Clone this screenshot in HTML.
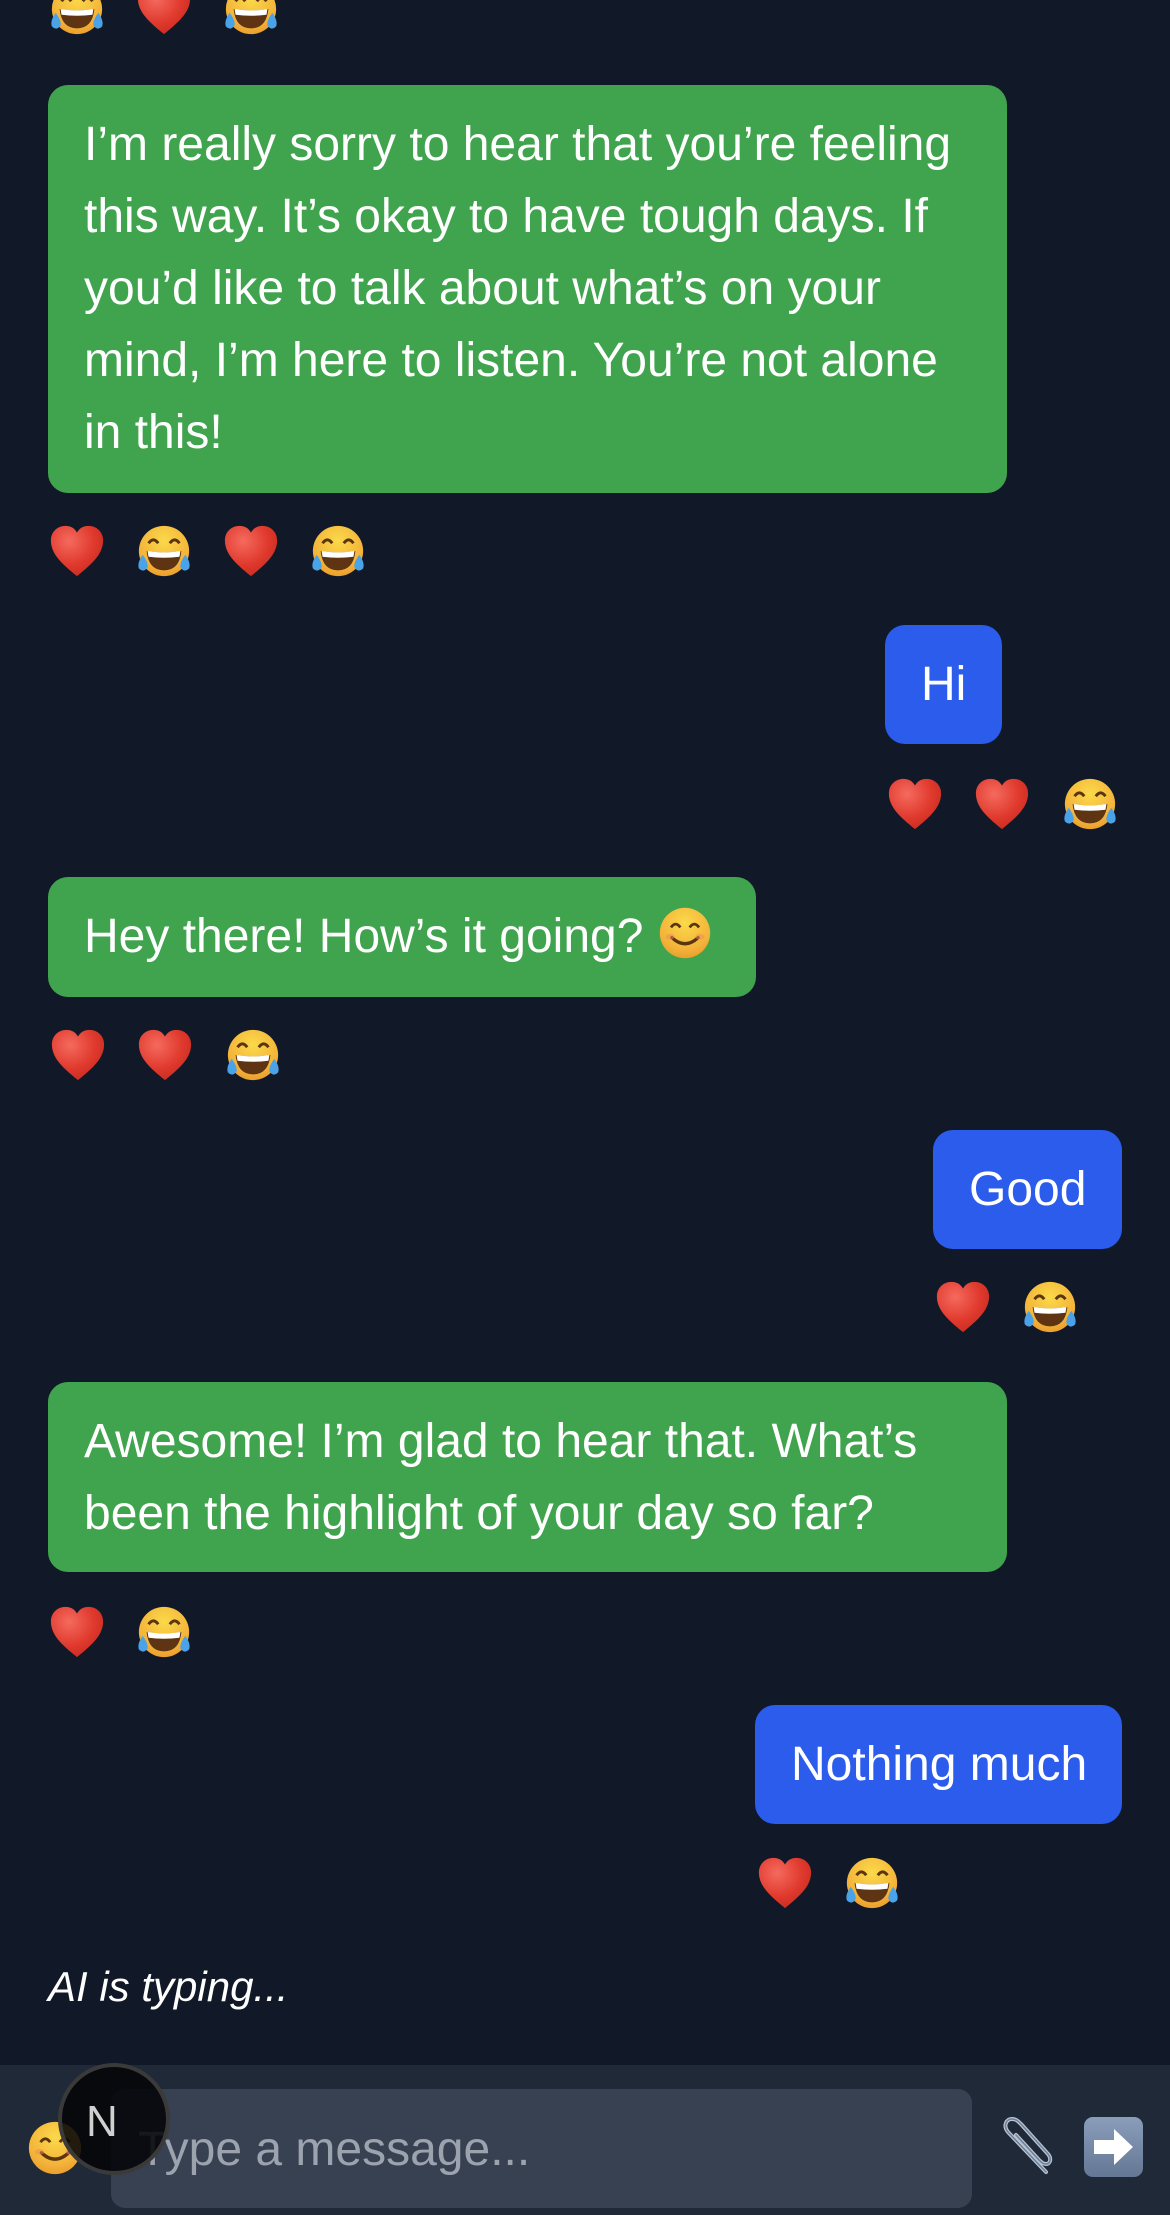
<!DOCTYPE html>
<html><head><meta charset="utf-8">
<style>
html,body{margin:0;padding:0}
body{width:1170px;height:2215px;background:#111827;position:relative;overflow:hidden;font-family:"Liberation Sans",Arial,sans-serif;color:#fff}
.b{position:absolute;box-sizing:border-box;padding:24px 36px;font-size:48px;line-height:72px;border-radius:20px;white-space:nowrap}
.g{background:#40a34d}
.u{background:#2b5cec}
.e{position:absolute;width:58px;height:58px}
</style></head><body>
<svg width="0" height="0" style="position:absolute">
<defs>
<radialGradient id="hg" cx="0.35" cy="0.3" r="0.8"><stop offset="0" stop-color="#f56a5e"/><stop offset="0.6" stop-color="#e0392d"/><stop offset="1" stop-color="#c42a20"/></radialGradient>
<radialGradient id="fg" cx="0.5" cy="0.3" r="0.75"><stop offset="0" stop-color="#fbd94a"/><stop offset="0.7" stop-color="#f3b33a"/><stop offset="1" stop-color="#e99a2a"/></radialGradient>
<symbol id="heart" viewBox="0 0 60 60"><path d="M30 56 C14 43 3 33 3 19 C3 10 10 4 18 4 C24 4 28 7 30 11 C32 7 36 4 42 4 C50 4 57 10 57 19 C57 33 46 43 30 56Z" fill="url(#hg)"/></symbol>
<symbol id="laugh" viewBox="0 0 60 60"><circle cx="30" cy="30" r="26" fill="url(#fg)"/>
<path d="M14 22 Q19 15 24 22" stroke="#5a3510" stroke-width="3" fill="none"/><path d="M36 22 Q41 15 46 22" stroke="#5a3510" stroke-width="3" fill="none"/>
<path d="M12 30 Q30 33 48 30 Q46 50 30 50 Q14 50 12 30Z" fill="#5e3412"/><path d="M13 30 Q30 33 47 30 L46 36 Q30 38 14 36Z" fill="#fff"/>
<path d="M8 34 Q2 42 4 48 Q9 53 13 47 Q14 42 8 34Z" fill="#4aa3e8"/><path d="M52 34 Q58 42 56 48 Q51 53 47 47 Q46 42 52 34Z" fill="#4aa3e8"/></symbol>
<symbol id="smile" viewBox="0 0 60 60"><circle cx="30" cy="30" r="27" fill="url(#fg)"/>
<path d="M15 24 Q20 17 25 24" stroke="#5a3510" stroke-width="3" fill="none"/><path d="M35 24 Q40 17 45 24" stroke="#5a3510" stroke-width="3" fill="none"/>
<path d="M16 35 Q30 48 44 35" stroke="#5a3510" stroke-width="3.5" fill="none" stroke-linecap="round"/>
<ellipse cx="14" cy="34" rx="5" ry="3" fill="#f08a5a" opacity=".5"/><ellipse cx="46" cy="34" rx="5" ry="3" fill="#f08a5a" opacity=".5"/></symbol>
</defs></svg>

<svg class="e" style="left:48px;top:-20px"><use href="#laugh"/></svg>
<svg class="e" style="left:135px;top:-20px"><use href="#heart"/></svg>
<svg class="e" style="left:222px;top:-20px"><use href="#laugh"/></svg>

<div class="b g" style="left:48px;top:85px;width:959px;height:408px">I’m really sorry to hear that you’re feeling<br>this way. It’s okay to have tough days. If<br>you’d like to talk about what’s on your<br>mind, I’m here to listen. You’re not alone<br>in this!</div>
<svg class="e" style="left:48px;top:522px"><use href="#heart"/></svg>
<svg class="e" style="left:135px;top:522px"><use href="#laugh"/></svg>
<svg class="e" style="left:222px;top:522px"><use href="#heart"/></svg>
<svg class="e" style="left:309px;top:522px"><use href="#laugh"/></svg>

<div class="b u" style="left:885px;top:625px;width:117px;height:119px">Hi</div>
<svg class="e" style="left:886px;top:775px"><use href="#heart"/></svg>
<svg class="e" style="left:973px;top:775px"><use href="#heart"/></svg>
<svg class="e" style="left:1061px;top:775px"><use href="#laugh"/></svg>

<div class="b g" style="left:48px;top:877px;width:708px;height:120px">Hey there! How’s it going? <svg style="width:56px;height:56px;vertical-align:-9px"><use href="#smile"/></svg></div>
<svg class="e" style="left:49px;top:1026px"><use href="#heart"/></svg>
<svg class="e" style="left:136px;top:1026px"><use href="#heart"/></svg>
<svg class="e" style="left:224px;top:1026px"><use href="#laugh"/></svg>

<div class="b u" style="left:933px;top:1130px;width:189px;height:119px">Good</div>
<svg class="e" style="left:934px;top:1278px"><use href="#heart"/></svg>
<svg class="e" style="left:1021px;top:1278px"><use href="#laugh"/></svg>

<div class="b g" style="left:48px;top:1382px;width:959px;height:190px">Awesome! I’m glad to hear that. What’s<br>been the highlight of your day so far?</div>
<svg class="e" style="left:48px;top:1603px"><use href="#heart"/></svg>
<svg class="e" style="left:135px;top:1603px"><use href="#laugh"/></svg>

<div class="b u" style="left:755px;top:1705px;width:367px;height:119px">Nothing much</div>
<svg class="e" style="left:756px;top:1854px"><use href="#heart"/></svg>
<svg class="e" style="left:843px;top:1854px"><use href="#laugh"/></svg>

<div style="position:absolute;left:48px;top:1962px;font-size:42px;line-height:50px;font-style:italic">AI is typing...</div>

<div style="position:absolute;left:0;top:2065px;width:1170px;height:150px;background:#1f2937"></div>
<svg style="position:absolute;left:26px;top:2119px;width:58px;height:58px"><use href="#smile"/></svg>
<div style="position:absolute;left:111px;top:2089px;width:861px;height:119px;background:#374151;border-radius:14px"></div>
<div style="position:absolute;left:138px;top:2122px;font-size:48px;line-height:56px;color:#9ca3af">Type a message...</div>
<div style="position:absolute;left:58px;top:2063px;width:112px;height:112px;box-sizing:border-box;border-radius:50%;border:4px solid #3a3a3a;background:rgba(5,5,8,.88)"></div>
<div style="position:absolute;left:86px;top:2098px;font-size:44px;line-height:48px;color:#d0d0d0">N</div>

<svg style="position:absolute;left:996px;top:2116px;width:62px;height:62px" viewBox="0 0 62 62">
<path d="M50 56 L12 16 C7 10 10 3 16 3 C20 3 22 5 25 8 L52 38 C56 43 54 48 50 48 C47 48 45 46 43 44 L20 19" fill="none" stroke="#b8c4d4" stroke-width="4" stroke-linecap="round"/>
<path d="M50 56 L12 16 C7 10 10 3 16 3 C20 3 22 5 25 8 L52 38 C56 43 54 48 50 48 C47 48 45 46 43 44 L20 19" fill="none" stroke="#6e7f96" stroke-width="1.5" stroke-linecap="round"/>
</svg>
<svg style="position:absolute;left:1084px;top:2117px;width:59px;height:60px" viewBox="0 0 59 60">
<defs><linearGradient id="ag" x1="0" y1="0" x2="0" y2="1"><stop offset="0" stop-color="#8a9dbb"/><stop offset="1" stop-color="#647894"/></linearGradient></defs>
<rect x="0" y="0" width="59" height="60" rx="9" fill="url(#ag)"/>
<path d="M10 23 H30 V12 L49 30 L30 48 V37 H10Z" fill="#fff"/>
</svg>
</body></html>
